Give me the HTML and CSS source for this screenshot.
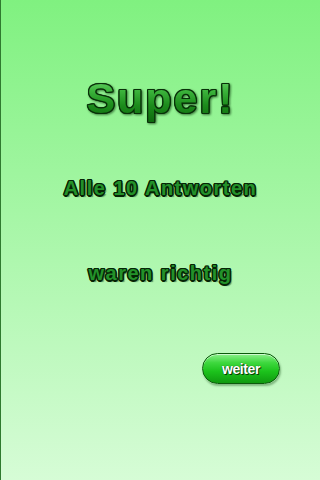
FILE: index.html
```html
<!DOCTYPE html>
<html lang="de">
<head>
<meta charset="utf-8">
<title>Super!</title>
<link rel="stylesheet" href="styles.css">
</head>
<body>
<main class="screen">
  <h1 class="title">Super!</h1>
  <p class="line line-first">Alle 10 Antworten</p>
  <p class="line line-second">waren richtig</p>
  <div class="actions">
    <button class="btn" type="button">weiter</button>
  </div>
</main>
</body>
</html>
```
FILE: styles.css
```css
html, body {
  margin: 0;
  padding: 0;
}
body {
  width: 320px;
  height: 480px;
  overflow: hidden;
  font-family: "Liberation Sans", Arial, sans-serif;
}
.screen {
  box-sizing: border-box;
  width: 320px;
  height: 480px;
  border-left: 1px solid #2f7a2f;
  background: linear-gradient(180deg, #80f180 0%, #a6f6a6 45%, #d6fcd6 100%);
  display: flex;
  flex-direction: column;
  align-items: center;
}
.title {
  margin: 74px 0 0;
  font-size: 43px;
  line-height: 48px;
  font-weight: 700;
  letter-spacing: 2px;
  background: linear-gradient(180deg, #7ae07a 0%, #3cb43c 35%, #1c8c1c 65%, #0e6a0e 100%);
  -webkit-background-clip: text;
  background-clip: text;
  color: transparent;
  filter: drop-shadow(1px 0 0 #083008) drop-shadow(-1px 0 0 #083008) drop-shadow(0 1px 0 #083008) drop-shadow(0 -1px 0 #083008) drop-shadow(1px 1px 1px rgba(0, 40, 0, 0.6));
}
.line {
  margin: 0;
  font-size: 20px;
  line-height: 24px;
  font-weight: 700;
  letter-spacing: 1.5px;
  color: #23912a;
  text-shadow:
    1.5px 0 0 #052405, -1.5px 0 0 #052405, 0 1.5px 0 #052405, 0 -1.5px 0 #052405,
    1px 1px 0 #052405, -1px -1px 0 #052405, 1px -1px 0 #052405, -1px 1px 0 #052405,
    2px 2px 1px rgba(0, 40, 0, 0.5);
}
.line-first {
  margin-top: 54px;
}
.line-second {
  margin-top: 61px;
}
.actions {
  align-self: stretch;
  display: flex;
  justify-content: flex-end;
  padding-right: 40px;
  margin-top: 68px;
}
.btn {
  width: 78px;
  height: 31px;
  padding: 0;
  border: 1px solid #0b5a0b;
  border-radius: 16px;
  background: linear-gradient(180deg, #8af08a 0%, #3ed83e 30%, #1cc21c 60%, #109a10 100%);
  box-shadow: inset 0 1px 0 rgba(255,255,255,0.6), 1px 2px 2px rgba(0,60,0,0.35);
  color: #ffffff;
  font-family: "Liberation Sans", Arial, sans-serif;
  font-size: 14px;
  font-weight: 700;
  letter-spacing: -0.4px;
  text-shadow: 0 0 1px #064006, 1px 1px 0 #064006;
}
```
